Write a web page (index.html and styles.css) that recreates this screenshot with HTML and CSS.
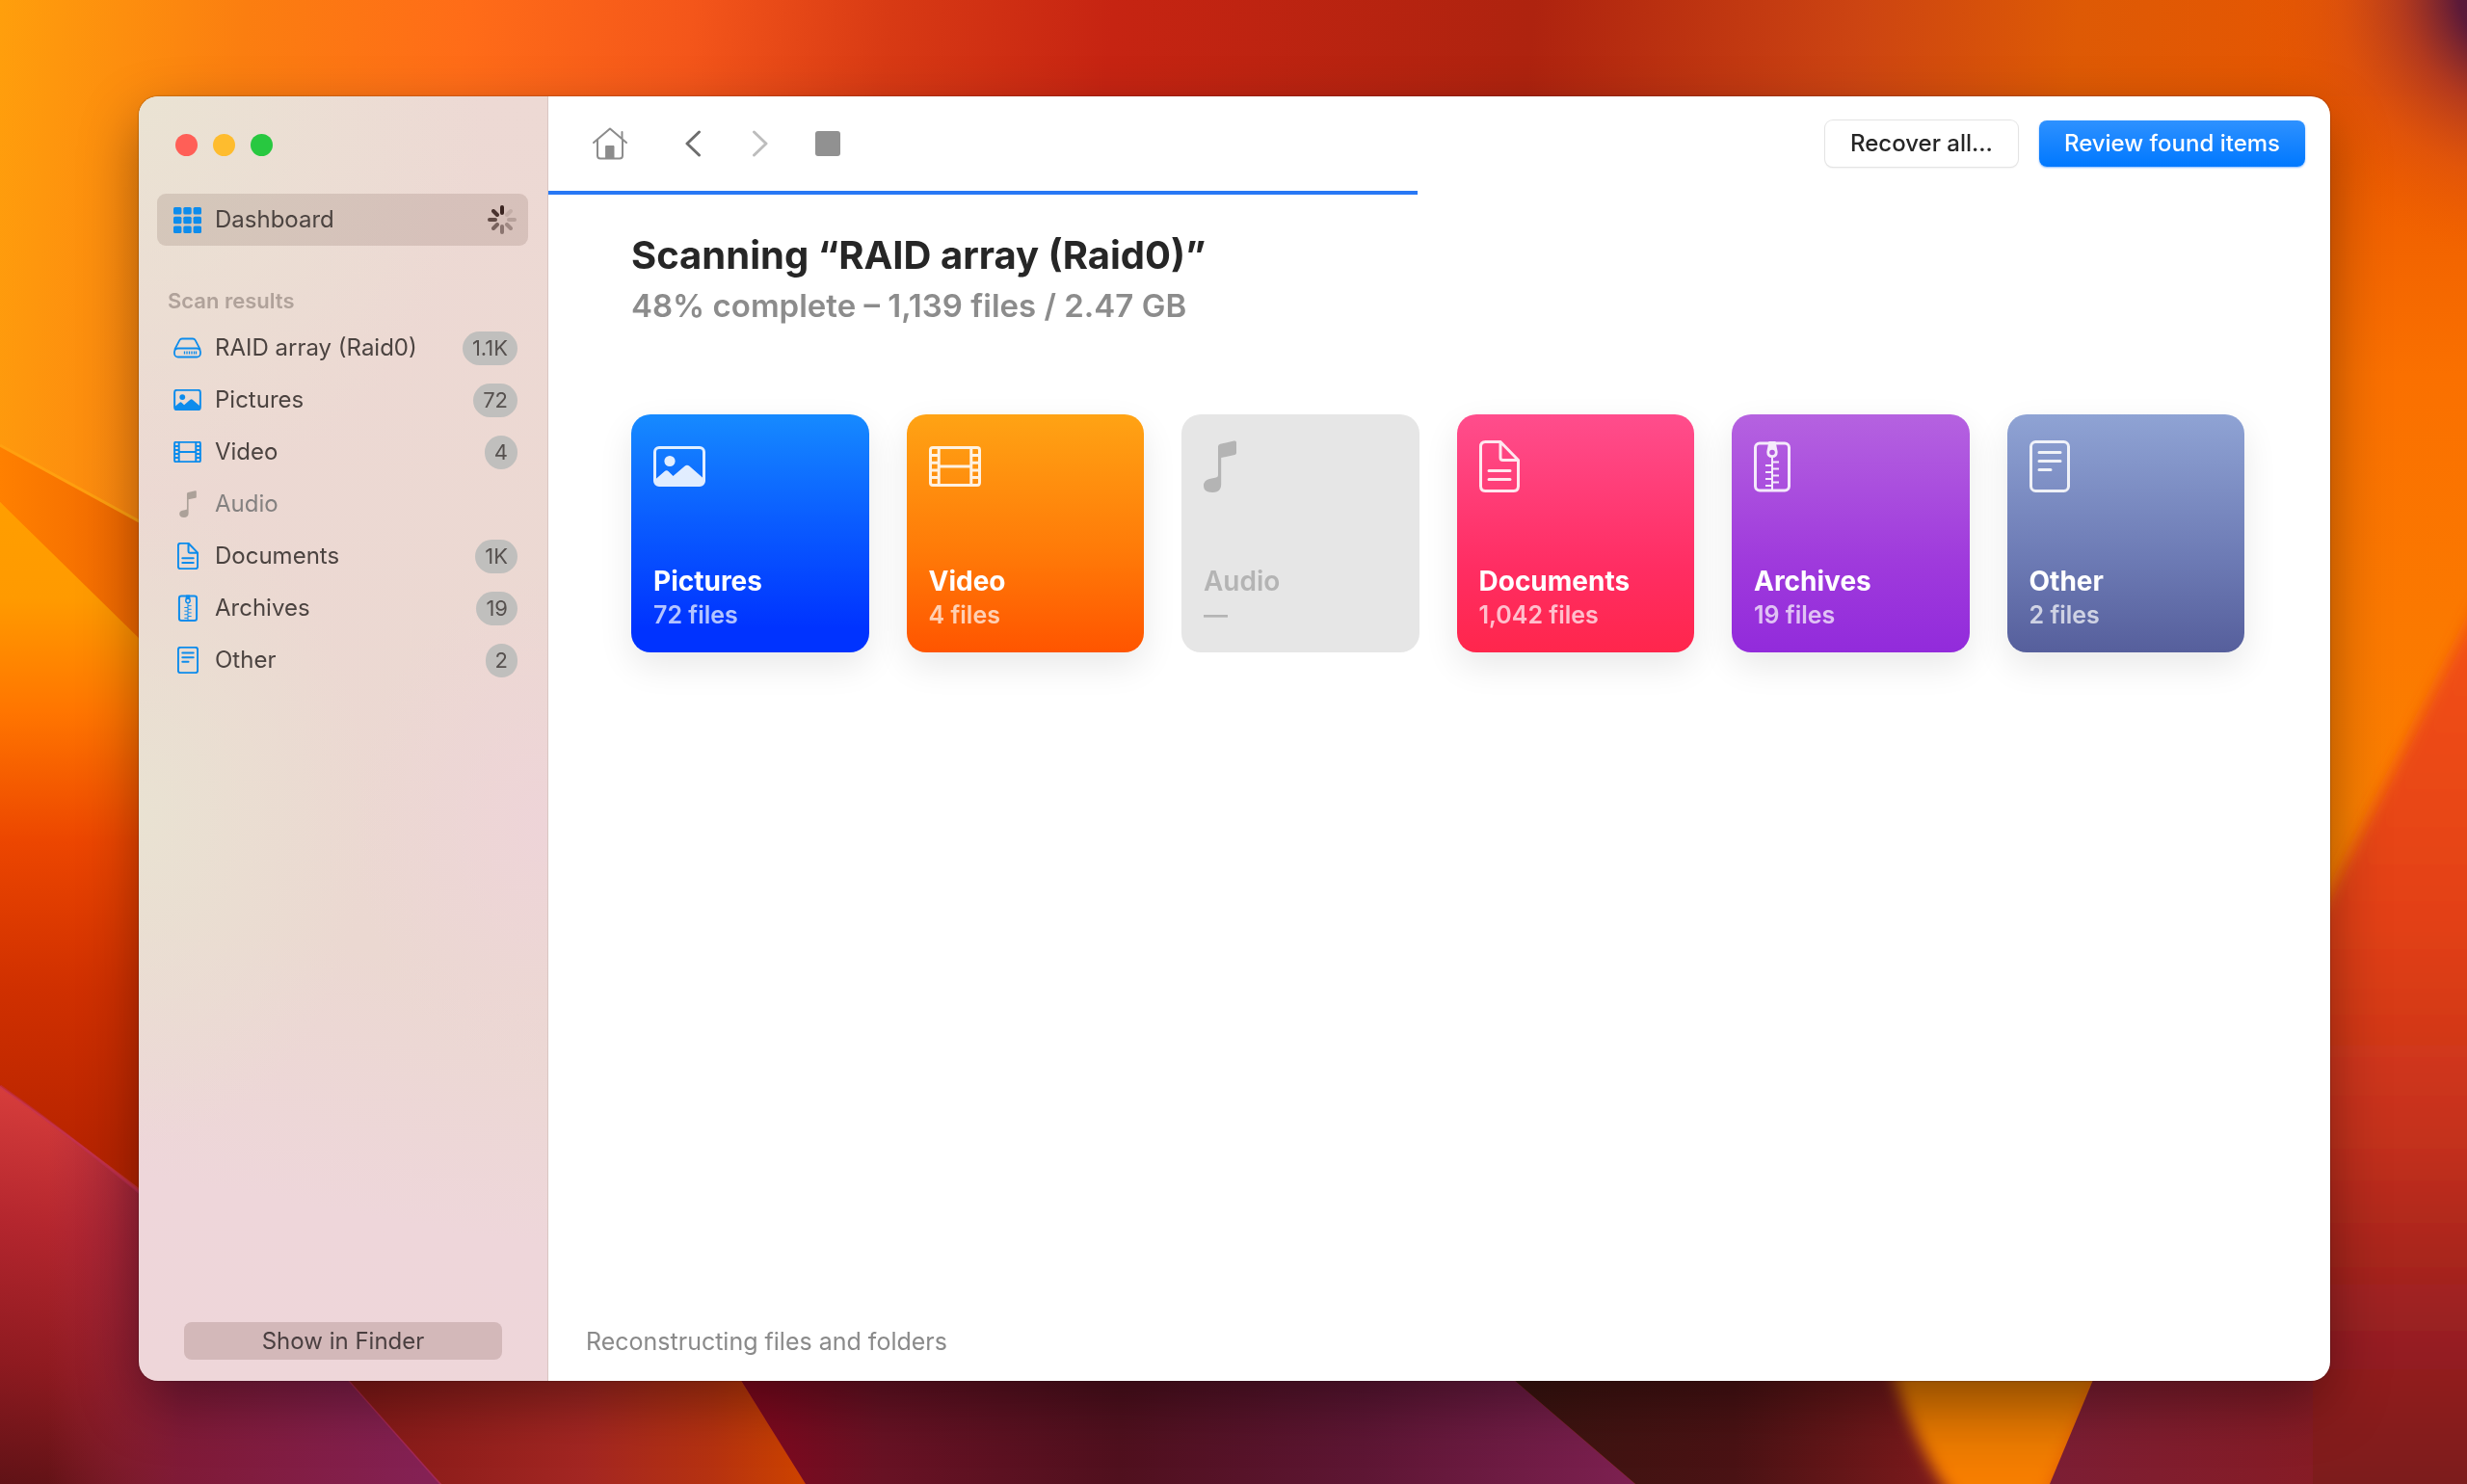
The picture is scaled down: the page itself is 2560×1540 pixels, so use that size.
FILE: index.html
```
<!DOCTYPE html>
<html lang="en">
<head>
  <meta charset="utf-8">
  <meta name="viewport" content="width=device-width, initial-scale=1">
  <title>Scanning “RAID array (Raid0)”</title>
  <link rel="stylesheet" href="styles.css">
</head>
<body>
  <svg class="symbols" aria-hidden="true">
    <symbol id="i-grid" viewBox="0 0 29 27">
      <g fill="currentColor">
        <rect x="0" y="0" width="8.4" height="7.6" rx="1.6"/><rect x="10.3" y="0" width="8.4" height="7.6" rx="1.6"/><rect x="20.6" y="0" width="8.4" height="7.6" rx="1.6"/>
        <rect x="0" y="9.7" width="8.4" height="7.6" rx="1.6"/><rect x="10.3" y="9.7" width="8.4" height="7.6" rx="1.6"/><rect x="20.6" y="9.7" width="8.4" height="7.6" rx="1.6"/>
        <rect x="0" y="19.4" width="8.4" height="7.6" rx="1.6"/><rect x="10.3" y="19.4" width="8.4" height="7.6" rx="1.6"/><rect x="20.6" y="19.4" width="8.4" height="7.6" rx="1.6"/>
      </g>
    </symbol>
    <symbol id="i-drive" viewBox="0 0 29 21">
      <g fill="none" stroke="currentColor" stroke-width="1.8" stroke-linejoin="round">
        <path d="M1.2 12.4 6.3 2.6Q7.200 1 9 1H20Q21.800 1 22.700 2.600L27.800 12.400"/>
        <rect x="1" y="11" width="27" height="9" rx="3.800"/>
        <path d="M11.500 14v3M14 14v3M16.500 14v3M19 14v3M21.500 14v3M23.500 14v3" stroke-width="1.300"/>
      </g>
    </symbol>
    <symbol id="i-picture" viewBox="0 0 54 42">
      <rect class="line" x="1.500" y="1.500" width="51" height="39" rx="4.500"/>
      <circle cx="17" cy="15.500" r="5.600" fill="currentColor"/>
      <path d="M2 34.500 11.500 26.200Q13.800 24.400 16 26.500L20.500 31 32.500 20.700Q35 18.800 37.500 20.800L52 33.500V37Q52 41 48 41H6Q2 41 2 37Z" fill="currentColor"/>
    </symbol>
    <symbol id="i-video" viewBox="0 0 54 42">
      <rect class="line" x="1.500" y="1.500" width="51" height="39" rx="2.500"/>
      <path class="line" d="M10.200 2v38M43.800 2v38M10.200 21h33.600M2 9.500h8M2 17.200h8M2 25h8M2 32.500h8M44 9.500h8M44 17.200h8M44 25h8M44 32.500h8"/>
    </symbol>
    <symbol id="i-audio" viewBox="0 0 34 54">
      <path d="M15 6.500Q15 4.300 17.200 3.800L31.500 .6Q34 0 34 2.200V13Q34 14.600 32.300 15L18.200 18V45.500Q18.200 54 9.200 54Q0 54 0 47Q0 41.500 6 40L13 38.600Q15 38.200 15 36Z" fill="currentColor"/>
    </symbol>
    <symbol id="i-document" viewBox="0 0 42 54">
      <path class="line" d="M22 1.500H6.500Q1.500 1.500 1.500 6.500V47.500Q1.500 52.500 6.500 52.500H35.500Q40.500 52.500 40.500 47.500V20.500L22 1.500V18Q22 20.500 24.500 20.500H40.500"/>
      <path class="line" d="M10 31.500h22M10 40.500h22"/>
    </symbol>
    <symbol id="i-archive" viewBox="0 0 38 54">
      <rect class="line" x="1.500" y="3" width="35" height="49" rx="4.500"/>
      <path d="M15.500 1h7l2.200 11q0 6-5.700 6t-5.700-6Z" fill="currentColor"/>
      <circle class="hole" cx="19" cy="12.500" r="2.800"/>
      <path class="tooth" d="M19 17V52M19 22.500h7M19 29.500h7M19 36.500h7M19 43.500h7M12 26h7M12 33h7M12 40h7M12 47h7"/>
    </symbol>
    <symbol id="i-other" viewBox="0 0 42 54">
      <rect class="line" x="1.500" y="1.500" width="39" height="51" rx="5"/>
      <path class="line" d="M10 12.500h22M10 21.500h22M10 30.500h12"/>
    </symbol>
  </svg>

  <svg class="wallpaper" viewBox="0 0 2560 1540" preserveAspectRatio="none" aria-hidden="true">
    <defs>
      <linearGradient id="top" x2="1" y2=".06">
        <stop offset="0" stop-color="#ff9f0c"/><stop offset=".1" stop-color="#fb7e10"/><stop offset=".19" stop-color="#ff6c18"/><stop offset=".28" stop-color="#f4561a"/><stop offset=".36" stop-color="#d83a14"/>
        <stop offset=".45" stop-color="#c62412"/><stop offset=".62" stop-color="#ae230f"/><stop offset=".75" stop-color="#cc4412"/><stop offset=".84" stop-color="#de5a05"/><stop offset="1" stop-color="#ea5400"/>
      </linearGradient>
      <linearGradient id="left" x1="0" y1="0" x2="0" y2="1">
        <stop offset="0" stop-color="#ff9e00"/><stop offset=".12" stop-color="#ff9a00"/><stop offset=".26" stop-color="#ff7500"/><stop offset=".42" stop-color="#ec4600"/><stop offset=".6" stop-color="#d03000"/><stop offset=".8" stop-color="#b82400"/><stop offset="1" stop-color="#a82000"/>
      </linearGradient>
      <linearGradient id="band" x2="1"><stop offset="0" stop-color="#ff8000"/><stop offset="1" stop-color="#e04c00"/></linearGradient>
      <linearGradient id="rose" gradientUnits="userSpaceOnUse" x1="60" y1="1130" x2="0" y2="1540">
        <stop offset="0" stop-color="#d83e3c"/><stop offset=".35" stop-color="#b4262e"/><stop offset=".7" stop-color="#8e1a20"/><stop offset="1" stop-color="#601216"/>
      </linearGradient>
      <linearGradient id="plum" gradientUnits="userSpaceOnUse" x1="50" y1="0" x2="440" y2="0">
        <stop offset="0" stop-color="#a02840" stop-opacity="0"/><stop offset=".35" stop-color="#821b3c" stop-opacity=".85"/><stop offset="1" stop-color="#842154"/>
      </linearGradient>
      <linearGradient id="ember" gradientUnits="userSpaceOnUse" x1="380" y1="0" x2="830" y2="0">
        <stop offset="0" stop-color="#861a18"/><stop offset=".5" stop-color="#a32622"/><stop offset=".8" stop-color="#b63210"/><stop offset="1" stop-color="#cc4200"/>
      </linearGradient>
      <linearGradient id="wine" gradientUnits="userSpaceOnUse" x1="780" y1="0" x2="1690" y2="0">
        <stop offset="0" stop-color="#80081e"/><stop offset=".15" stop-color="#681224"/><stop offset=".42" stop-color="#50101e"/><stop offset=".7" stop-color="#5e1634"/><stop offset="1" stop-color="#7c2050"/>
      </linearGradient>
      <linearGradient id="dark" gradientUnits="userSpaceOnUse" x1="1580" y1="0" x2="2020" y2="0">
        <stop offset="0" stop-color="#3c1410"/><stop offset=".5" stop-color="#4a1214"/><stop offset="1" stop-color="#7e1a1c"/>
      </linearGradient>
      <linearGradient id="wedge" gradientUnits="userSpaceOnUse" x1="0" y1="1420" x2="0" y2="1540"><stop offset="0" stop-color="#d87400"/><stop offset="1" stop-color="#f87e00"/></linearGradient>
      <linearGradient id="maroon" gradientUnits="userSpaceOnUse" x1="2130" y1="0" x2="2560" y2="0"><stop offset="0" stop-color="#7c1e34"/><stop offset="1" stop-color="#8c1a1c"/></linearGradient>
      <linearGradient id="right" gradientUnits="userSpaceOnUse" x1="0" y1="100" x2="0" y2="925"><stop offset="0" stop-color="#e95600"/><stop offset=".35" stop-color="#fa7000"/><stop offset="1" stop-color="#fc8200"/></linearGradient>
      <linearGradient id="flame" gradientUnits="userSpaceOnUse" x1="0" y1="650" x2="0" y2="1540">
        <stop offset="0" stop-color="#f25012"/><stop offset=".35" stop-color="#e24016"/><stop offset=".6" stop-color="#c4301c"/><stop offset=".8" stop-color="#9c2020"/><stop offset="1" stop-color="#7c1a1e"/>
      </linearGradient>
      <radialGradient id="corner" gradientUnits="userSpaceOnUse" cx="2620" cy="-10" r="280">
        <stop offset="0" stop-color="#3a1040"/><stop offset=".25" stop-color="#5c1a38"/><stop offset=".45" stop-color="#a03028" stop-opacity=".75"/><stop offset=".7" stop-color="#d04a18" stop-opacity=".4"/><stop offset="1" stop-color="#e95600" stop-opacity="0"/>
      </radialGradient>
      <filter id="soft" x="-20%" y="-20%" width="140%" height="140%"><feGaussianBlur stdDeviation="8"/></filter>
    </defs>
    <rect width="2560" height="1540" fill="url(#top)"/>
    <path d="M0 462 300 626V840L0 521Z" fill="url(#band)"/>
    <path d="M0 462 300 626" stroke="#ffa010" stroke-width="3"/>
    <path d="M0 521 300 815V1360H0Z" fill="url(#left)"/>
    <path d="M0 1127Q150 1232 380 1420L470 1560H0Z" fill="url(#rose)"/>
    <path d="M0 1127Q150 1232 350 1420L476 1560H0Z" fill="url(#plum)"/>
    <path d="M0 1127Q150 1232 350 1418L470 1554" fill="none" stroke="#c03060" stroke-width="3" opacity=".5"/>
    <path d="M346 1414H757L836 1540H458Z" fill="url(#ember)"/>
    <path d="M761 1420H1557L1697 1540H836Z" fill="url(#wine)"/>
    <path d="M1557 1420H2040V1540H1697Z" fill="url(#dark)"/>
    <path d="M2300 100H2560V1000H2300Z" fill="url(#right)"/>
    <path d="M2300 1160 2419 925 2600 570V1580H2300Z" fill="url(#flame)" filter="url(#soft)"/>
    <path d="M1960 1410H2185L2120 1560H2030Q1985 1500 1960 1410Z" fill="url(#wedge)" filter="url(#soft)"/>
    <path d="M2177 1420H2400V1540H2127Z" fill="url(#maroon)"/>
    <rect x="2300" width="260" height="300" fill="url(#corner)"/>
  </svg>

  <div class="window">
    <aside class="sidebar">
      <div class="lights">
        <button class="light light-close" aria-label="Close"></button>
        <button class="light light-min" aria-label="Minimize"></button>
        <button class="light light-zoom" aria-label="Zoom"></button>
      </div>
      <nav class="nav">
        <a class="item item-active" href="#dashboard">
          <span class="item-icon"><svg class="w-wide grid-icon"><use href="#i-grid"/></svg></span>
          <span class="item-label">Dashboard</span>
          <svg class="spinner" viewBox="-16 -16 32 32" role="img" aria-label="Scanning">
            <g stroke="#3a2420" stroke-width="4" stroke-linecap="round">
              <path d="M0-7V-13"/><path d="M5-5 9-9" opacity=".12"/><path d="M7 0H13" opacity=".2"/><path d="M5 5 9 9" opacity=".35"/>
              <path d="M0 7V13" opacity=".48"/><path d="M-5 5-9 9" opacity=".6"/><path d="M-7 0H-13" opacity=".75"/><path d="M-5-5-9-9" opacity=".9"/>
            </g>
          </svg>
        </a>
        <h2 class="section">Scan results</h2>
        <a class="item" href="#raid"><span class="item-icon"><svg class="w-wide"><use href="#i-drive"/></svg></span><span class="item-label">RAID array (Raid0)</span><span class="badge">1.1K</span></a>
        <a class="item" href="#pictures"><span class="item-icon"><svg class="w-wide"><use href="#i-picture"/></svg></span><span class="item-label">Pictures</span><span class="badge">72</span></a>
        <a class="item" href="#video"><span class="item-icon"><svg class="w-wide"><use href="#i-video"/></svg></span><span class="item-label">Video</span><span class="badge">4</span></a>
        <a class="item item-off" href="#audio"><span class="item-icon"><svg class="w-tall"><use href="#i-audio"/></svg></span><span class="item-label">Audio</span></a>
        <a class="item" href="#documents"><span class="item-icon"><svg class="w-tall"><use href="#i-document"/></svg></span><span class="item-label">Documents</span><span class="badge">1K</span></a>
        <a class="item" href="#archives"><span class="item-icon"><svg class="w-tall"><use href="#i-archive"/></svg></span><span class="item-label">Archives</span><span class="badge">19</span></a>
        <a class="item" href="#other"><span class="item-icon"><svg class="w-tall"><use href="#i-other"/></svg></span><span class="item-label">Other</span><span class="badge">2</span></a>
      </nav>
      <button class="finder">Show in Finder</button>
    </aside>

    <main class="main">
      <header class="toolbar">
        <button class="tool tool-home" aria-label="Home">
          <svg width="36" height="34" viewBox="0 0 36 34" fill="none" stroke="#8c8c8c" stroke-width="2" stroke-linecap="round" stroke-linejoin="round"><path d="M1 16 18 1.500 35 16M30.500 12V5M5 13V29.500Q5 32.500 8 32.500H28Q31 32.500 31 29.500V13"/><path d="M14 19.500h8v12.500h-8Z" fill="#8c8c8c" stroke-width="1"/></svg>
        </button>
        <button class="tool" aria-label="Back"><svg width="18" height="28" viewBox="0 0 18 28" fill="none" stroke="#6e6e6e" stroke-width="3" stroke-linecap="round" stroke-linejoin="round"><path d="M15.500 2 3 14 15.500 26"/></svg></button>
        <button class="tool" aria-label="Forward" disabled><svg width="18" height="28" viewBox="0 0 18 28" fill="none" stroke="#bdbdbd" stroke-width="3" stroke-linecap="round" stroke-linejoin="round"><path d="M2.500 2 15 14 2.500 26"/></svg></button>
        <button class="tool" aria-label="Stop"><svg width="26" height="26" viewBox="0 0 26 26"><rect width="26" height="26" rx="3" fill="#919191"/></svg></button>
        <div class="actions">
          <button class="btn">Recover all...</button>
          <button class="btn btn-primary">Review found items</button>
        </div>
      </header>
      <progress class="progress" value="488" max="1000" aria-label="Scan progress"></progress>

      <section class="content">
        <h1 class="title">Scanning “RAID array (Raid0)”</h1>
        <p class="subtitle">48% complete – 1,139 files / 2.47 GB</p>
        <div class="cards">
          <button class="card card-pictures"><span class="card-icon"><svg class="w-wide"><use href="#i-picture"/></svg></span><span class="card-name">Pictures</span><span class="card-count">72 files</span></button>
          <button class="card card-video"><span class="card-icon"><svg class="w-wide"><use href="#i-video"/></svg></span><span class="card-name">Video</span><span class="card-count">4 files</span></button>
          <button class="card card-audio" disabled><span class="card-icon"><svg class="w-tall"><use href="#i-audio"/></svg></span><span class="card-name">Audio</span><span class="card-count">—</span></button>
          <button class="card card-documents"><span class="card-icon"><svg class="w-tall"><use href="#i-document"/></svg></span><span class="card-name">Documents</span><span class="card-count">1,042 files</span></button>
          <button class="card card-archives"><span class="card-icon"><svg class="w-tall"><use href="#i-archive"/></svg></span><span class="card-name">Archives</span><span class="card-count">19 files</span></button>
          <button class="card card-other"><span class="card-icon"><svg class="w-tall"><use href="#i-other"/></svg></span><span class="card-name">Other</span><span class="card-count">2 files</span></button>
        </div>
      </section>
      <footer class="status">Reconstructing files and folders</footer>
    </main>
  </div>
</body>
</html>
```
FILE: styles.css
```
* { box-sizing: border-box; }

body {
  margin: 0;
  min-height: 100vh;
  display: flex;
  padding: 100px 142px 107px 144px;
  font: 400 24px/30px Inter, "Liberation Sans", sans-serif;
  color: #262626;
  background: #c62412;
}

button {
  font: inherit;
  color: inherit;
  border: 0;
  padding: 0;
  background: none;
}

h1, h2, p { margin: 0; }

.symbols { position: absolute; width: 0; height: 0; }
.wallpaper { position: fixed; inset: 0; width: 100%; height: 100%; z-index: -1; }

/* Icons share one set of shapes; the line weight follows the place of use */
.line, .tooth {
  fill: none;
  stroke: currentColor;
  stroke-width: var(--line);
  stroke-linecap: round;
  stroke-linejoin: round;
  vector-effect: non-scaling-stroke;
}
.tooth { stroke-width: var(--tooth); stroke-linecap: butt; }
.hole { fill: var(--hole); }

/* Window */
.window {
  flex: 1;
  display: flex;
  border-radius: 20px;
  overflow: hidden;
  box-shadow: 0 0 2px rgba(0, 0, 0, .5), 0 24px 60px rgba(0, 0, 0, .36);
}

/* Sidebar */
.sidebar {
  width: 425px;
  flex: none;
  display: flex;
  flex-direction: column;
  border-right: 1px solid #d9c6c2;
  background:
    radial-gradient(ellipse 200px 260px at 100% 57%, #eed4d8, rgba(238, 212, 216, 0)),
    radial-gradient(ellipse 240px 340px at 0 56%, #e9e2d2, rgba(233, 226, 210, 0)),
    radial-gradient(ellipse 360px 420px at 0 0, #eae3d3, rgba(234, 227, 211, 0)),
    linear-gradient(190deg, #edd9d4 0%, #ebd8d1 65%, #eed6da 85%, #eed6d9 100%);
}
.lights { display: flex; gap: 16px; padding: 39px 38px; }
.light { width: 23px; height: 23px; border-radius: 50%; }
.light-close { background: #ff5f57; }
.light-min { background: #febc2e; }
.light-zoom { background: #28c840; }

.nav { flex: 1; padding: 0 20px 0 19px; }
.item {
  display: flex;
  align-items: center;
  gap: 14px;
  height: 54px;
  padding: 0 11px 0 17px;
  border-radius: 9px;
  color: #4b4340;
  text-decoration: none;
}
.item-active { background: rgba(70, 30, 20, .13); }
.item-off { color: #848180; }
.item-label { flex: 1; }
.item-icon {
  --line: 2px;
  --tooth: 1px;
  --hole: #ecdad3;
  width: 29px;
  display: flex;
  justify-content: center;
  color: #0d8cec;
}
.item-off .item-icon { color: #aca199; }
.item-icon .w-wide { width: 29px; height: 22px; }
.item-icon .grid-icon { height: 27px; }
.item-icon .w-tall { width: 22px; height: 28px; }
.spinner { width: 32px; height: 32px; }
.section {
  margin-top: 35px;
  padding-left: 11px;
  font-size: 22px;
  font-weight: 600;
  line-height: 44px;
  color: #b0a29a;
}
.badge {
  min-width: 33px;
  padding: 0 10px;
  border-radius: 18px;
  font-size: 22px;
  line-height: 35px;
  text-align: center;
  color: #55504e;
  background: #c0bfbd;
}
.finder {
  height: 39px;
  margin: 0 47px 22px;
  border-radius: 8px;
  color: #4a3f40;
  background: #d3b8b9;
}

/* Main pane */
.main {
  flex: 1;
  min-width: 0;
  display: flex;
  flex-direction: column;
  background: #fff;
}
.toolbar { display: flex; align-items: center; height: 98px; padding: 0 26px 0 29px; }
.tool { width: 70px; height: 48px; display: flex; align-items: center; justify-content: center; }
.tool-home { margin-right: 16px; }
.actions { display: flex; gap: 22px; margin-left: auto; }
.btn {
  height: 48px;
  padding: 0 26px;
  border-radius: 8px;
  font-weight: 500;
  background: #fff;
  box-shadow: 0 0 0 1px #e4e4e4, 0 1px 2px rgba(0, 0, 0, .16);
}
.btn-primary {
  color: #fff;
  background: linear-gradient(#2e91ff, #0078ff);
  box-shadow: 0 1px 2px rgba(0, 110, 255, .5);
}
.progress { display: block; width: 100%; height: 4px; border: 0; appearance: none; background: #fff; }
.progress::-webkit-progress-bar { background: #fff; }
.progress::-webkit-progress-value { background: #2878f5; }

.content { flex: 1; padding: 36px 89px 40px 86px; }
.title { font-size: 40px; font-weight: 700; line-height: 54px; }
.subtitle { font-size: 33px; font-weight: 600; line-height: 50px; color: #8c8c8c; }

.cards {
  display: grid;
  grid-template-columns: repeat(6, 1fr);
  gap: 39px;
  margin-top: 88px;
}
.card {
  display: flex;
  flex-direction: column;
  align-items: flex-start;
  aspect-ratio: 1;
  padding: 26px 23px 22px;
  border-radius: 20px;
  text-align: left;
  color: #fff;
  box-shadow: 0 14px 36px rgba(0, 0, 0, .09);
}
.card-icon {
  --line: 3px;
  --tooth: 2px;
  flex: 1;
  opacity: .88;
}
.card-icon svg { display: block; height: 56px; }
.card-icon .w-wide { width: 54px; }
.card-icon .w-tall { width: 42px; }
.card-audio .w-tall { width: 34px; }
.card-archives .w-tall { width: 38px; }
.card-name { font-size: 28px; font-weight: 700; line-height: 36px; }
.card-count { font-size: 25px; font-weight: 600; line-height: 34px; opacity: .7; }

.card-pictures { background: linear-gradient(#168aff, #0a5cff 45%, #0033ff 90%); }
.card-video { background: linear-gradient(#ffa314, #ff7a08 58%, #ff5500); }
.card-audio { color: #b4b4b4; background: #e6e6e6; box-shadow: none; }
.card-audio .card-icon, .card-audio .card-count { opacity: 1; }
.card-audio .card-name { font-weight: 600; }
.card-documents { background: linear-gradient(#ff4d8c, #ff2d62 65%, #ff264c); }
.card-archives { --hole: #b058dc; background: linear-gradient(#b562e0, #9f3adc 62%, #922bdb); }
.card-other { background: linear-gradient(#8fa3d4, #6d7bb5 60%, #565f9c); }

.status { padding: 0 39px 26px; font-size: 25px; line-height: 30px; color: #8a8a8a; }
```
